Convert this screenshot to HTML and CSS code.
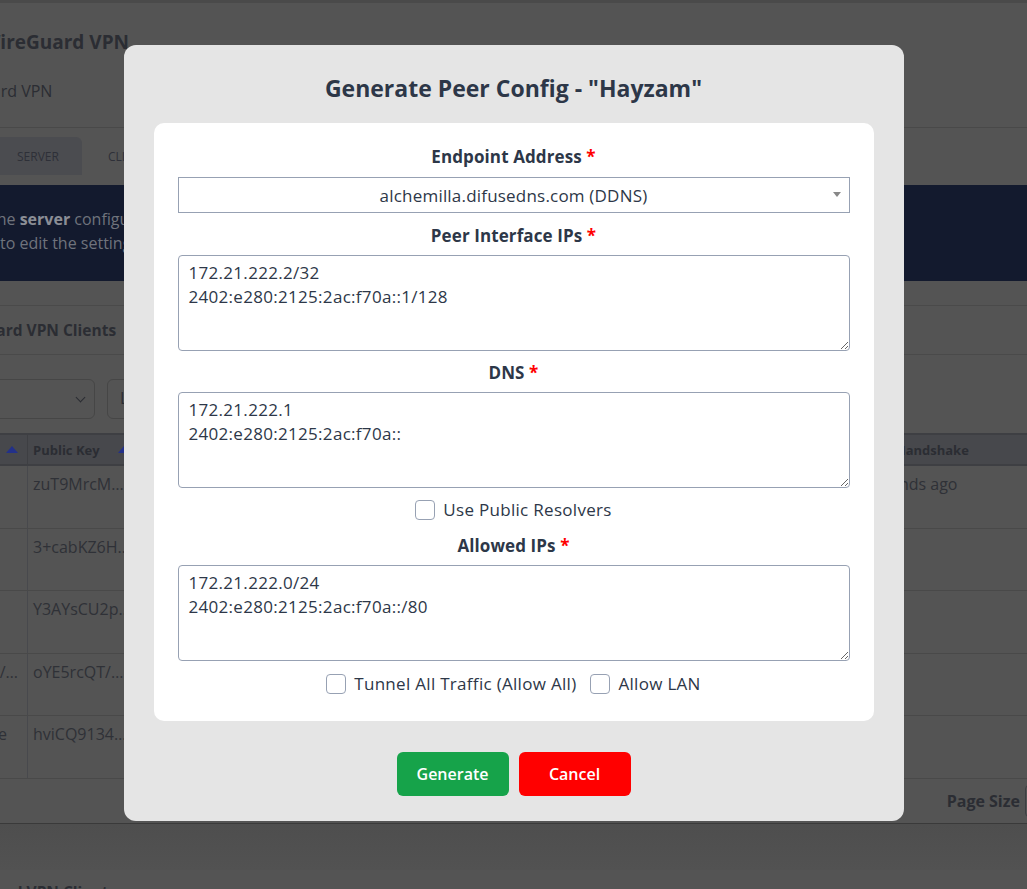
FILE: index.html
```html
<!DOCTYPE html>
<html lang="en">
<head>
    <meta charset="UTF-8">
    <meta name="viewport" content="width=device-width, initial-scale=1.0">
    <title>WireGuard VPN</title>
    <link rel="stylesheet" href="styles.css">
</head>
<body>

    <div class="page">
        <header class="page-header">
            <h1 class="page-title">WireGuard VPN</h1>
            <p class="page-subtitle">WireGuard VPN</p>
        </header>

        <nav class="tabs">
            <span class="tab active">SERVER</span>
            <span class="tab">CLIENTS</span>
        </nav>

        <div class="banner">
            <p class="banner-line first">the <b>server</b> configuration is shown below. Use the settings button</p>
            <p class="banner-line">to edit the settings of this interface.</p>
        </div>

        <h2 class="section-title">WireGuard VPN Clients</h2>

        <div class="filters">
            <div class="filter wide"><span class="chevron"></span></div>
            <div class="filter">Live</div>
        </div>

        <div class="table">
            <div class="thead">
                <div class="th first">Name <span class="sort"></span></div>
                <div class="th">Public Key <span class="sort"></span></div>
                <div class="th"></div>
                <div class="th last">Last Handshake</div>
            </div>
            <div class="tr">
                <div class="td first"></div>
                <div class="td">zuT9MrcM…</div>
                <div class="td"></div>
                <div class="td last">seconds ago</div>
            </div>
            <div class="tr">
                <div class="td first"></div>
                <div class="td">3+cabKZ6H…</div>
                <div class="td"></div>
                <div class="td last"></div>
            </div>
            <div class="tr">
                <div class="td first"></div>
                <div class="td">Y3AYsCU2p…</div>
                <div class="td"></div>
                <div class="td last"></div>
            </div>
            <div class="tr">
                <div class="td first">Hayzam-PC/…</div>
                <div class="td">oYE5rcQT/…</div>
                <div class="td"></div>
                <div class="td last"></div>
            </div>
            <div class="tr">
                <div class="td first short">iPhone</div>
                <div class="td">hviCQ9134…</div>
                <div class="td"></div>
                <div class="td last"></div>
            </div>
            <div class="tfoot">
                <span class="page-size">Page Size</span>
                <span class="page-size-box"></span>
            </div>
        </div>

        <div class="page-band"></div>
        <h2 class="section-title bottom">WireGuard VPN Clients</h2>
    </div>

    <!-- Modal de configuração do peer -->
    <div class="backdrop">
        <div class="modal">
            <h3 class="modal-title">Generate Peer Config - "Hayzam"</h3>

            <form class="card">
                <label class="field-label" for="endpoint">Endpoint Address <span class="req">*</span></label>
                <div class="select-wrap">
                    <select id="endpoint" class="field-select">
                        <option>alchemilla.difusedns.com (DDNS)</option>
                    </select>
                </div>

                <label class="field-label gap-md" for="peerips">Peer Interface IPs <span class="req">*</span></label>
                <textarea id="peerips" class="field-area">172.21.222.2/32
2402:e280:2125:2ac:f70a::1/128</textarea>

                <label class="field-label gap-sm" for="dns">DNS <span class="req">*</span></label>
                <textarea id="dns" class="field-area">172.21.222.1
2402:e280:2125:2ac:f70a::</textarea>

                <div class="check-row first-row">
                    <label class="check"><input type="checkbox"> Use Public Resolvers</label>
                </div>

                <label class="field-label gap-lg" for="allowed">Allowed IPs <span class="req">*</span></label>
                <textarea id="allowed" class="field-area">172.21.222.0/24
2402:e280:2125:2ac:f70a::/80</textarea>

                <div class="check-row last-row">
                    <label class="check"><input type="checkbox"> Tunnel All Traffic (Allow All)</label>
                    <label class="check"><input type="checkbox"> Allow LAN</label>
                </div>
            </form>

            <div class="actions">
                <button type="button" class="btn btn-generate">Generate</button>
                <button type="button" class="btn btn-cancel">Cancel</button>
            </div>
        </div>
    </div>

</body>
</html>
```

FILE: styles.css
```css
body {
    margin: 0;
    font-family: 'Open Sans', 'Noto Sans', sans-serif;
    background-color: #545454;
    color: #2b2d33;
    overflow: hidden;
}

/* pagina de fundo (ja escurecida pelo modal) */
.page {
    height: 889px;
    overflow: hidden;
    border-top: 3px solid #4a4a4a;
}

.page-header {
    margin-left: -18px;
    padding-top: 26px;
    height: 98px;
    border-bottom: 1px solid #494949;
}

.page-title {
    margin: 0;
    font-size: 19px;
    line-height: 26px;
    font-weight: 700;
}

.page-subtitle {
    margin: 24px 0 0 -46px;
    font-size: 16px;
    line-height: 24px;
}

.tabs {
    display: flex;
    gap: 3px;
    margin-top: 9px;
    height: 38px;
    margin-left: -6px;
}

.tab {
    display: flex;
    align-items: center;
    padding: 0 23px;
    font-size: 12px;
    color: #2e3038;
    border-radius: 6px 6px 0 0;
}

.tab.active {
    background-color: #4b4c50;
}

.banner {
    margin-top: 10px;
    height: 96px;
    box-sizing: border-box;
    padding-top: 22px;
    background-color: #131a2e;
    color: #6f737c;
    font-size: 16px;
    line-height: 24px;
}

.banner b {
    color: #8b8e96;
}

.banner-line {
    margin: 0;
    white-space: nowrap;
}

.banner-line.first {
    margin-left: -9px;
}

.section-title {
    margin: 24px 0 0 -61px;
    padding: 12px 0;
    font-size: 15.5px;
    line-height: 24px;
    font-weight: 700;
    border-top: 1px solid #4a4a4a;
    border-bottom: 1px solid #4a4a4a;
}

.filters {
    display: flex;
    gap: 12px;
    margin-top: 24px;
    height: 40px;
}

.filter {
    position: relative;
    width: 300px;
    border: 1px solid #464646;
    border-radius: 6px;
    box-sizing: border-box;
    padding: 7px 12px;
    font-size: 16px;
}

.filter.wide {
    margin-left: -205px;
}

.chevron {
    position: absolute;
    right: 10px;
    top: 14px;
    width: 6px;
    height: 6px;
    border-right: 1.5px solid #2b2d33;
    border-bottom: 1.5px solid #2b2d33;
    transform: rotate(45deg);
}

.table {
    margin-top: 14px;
    margin-left: -150px;
}

.thead, .tr {
    display: grid;
    grid-template-columns: 178px 200px 1fr 167px;
}

.thead {
    height: 33px;
    background-color: #47484c;
    border-top: 2px solid #3e3f43;
    border-bottom: 2px solid #3e3f43;
    box-sizing: border-box;
}

.th {
    display: flex;
    align-items: center;
    padding-left: 5px;
    font-size: 13px;
    font-weight: 700;
    border-right: 1px solid #3e3f43;
    white-space: nowrap;
}

.th.first {
    justify-content: space-between;
    padding-right: 9px;
}

.th.last {
    border-right: none;
}

.sort {
    display: inline-block;
    margin-left: 18px;
    width: 0;
    height: 0;
    border-left: 6px solid transparent;
    border-right: 6px solid transparent;
    border-bottom: 7px solid #23318a;
}

.tr {
    height: 62.6px;
    border-bottom: 1px solid #494949;
    box-sizing: border-box;
}

.td {
    padding: 6px 5px 0;
    font-size: 16px;
    line-height: 24px;
    color: #2f3137;
    border-right: 1px solid #48494d;
    white-space: nowrap;
    overflow: hidden;
}

.td.first {
    text-align: right;
    padding-right: 9px;
}

.td.first.short {
    padding-right: 20px;
}

.td.last {
    border-right: none;
}

.tfoot {
    display: flex;
    justify-content: flex-end;
    align-items: center;
    gap: 5px;
    height: 44px;
    margin-right: -60px;
    border-bottom: 1px solid #3a3a3a;
}

.page-size {
    font-size: 16px;
    font-weight: 700;
}

.page-size-box {
    width: 60px;
    height: 30px;
    border: 1px solid #3e3f43;
    border-radius: 4px;
}

.page-band {
    height: 46px;
    background: linear-gradient(#4e4e4e, #525252);
}

.section-title.bottom {
    margin-top: 10px;
    padding: 0;
    border: none;
}

/* modal */
.backdrop {
    position: fixed;
    inset: 0;
    display: flex;
    justify-content: center;
    align-items: flex-start;
    padding-top: 45px;
}

.modal {
    width: 780px;
    box-sizing: border-box;
    padding: 0 30px 25px;
    background-color: #e5e5e5;
    border-radius: 12px;
}

.modal-title {
    margin: 28px 0 20px;
    font-size: 23px;
    line-height: 30px;
    font-weight: 700;
    text-align: center;
    color: #2d3748;
}

.card {
    display: flex;
    flex-direction: column;
    padding: 22px 24px 25px;
    background-color: #ffffff;
    border-radius: 10px;
    color: #2d3748;
}

.field-label {
    display: block;
    margin-bottom: 8px;
    font-size: 17px;
    line-height: 24px;
    font-weight: 700;
    letter-spacing: 0.1px;
    text-align: center;
}

.field-label.gap-md {
    margin-top: 11px;
    margin-bottom: 7px;
}

.field-label.gap-sm {
    margin-top: 10px;
    margin-bottom: 7px;
}

.field-label.gap-lg {
    margin-top: 12px;
    margin-bottom: 7px;
}

.req {
    color: #ff0000;
}

.select-wrap {
    position: relative;
}

.select-wrap::after {
    content: "";
    position: absolute;
    right: 9px;
    top: 15px;
    border-left: 4px solid transparent;
    border-right: 4px solid transparent;
    border-top: 5px solid #888888;
}

.field-select {
    display: block;
    width: 100%;
    height: 36px;
    padding: 0 24px;
    border: 1px solid #97a1b3;
    border-radius: 0;
    background-color: #ffffff;
    font-family: inherit;
    font-size: 17px;
    letter-spacing: 0.2px;
    color: #2d3748;
    text-align: center;
    text-align-last: center;
    -webkit-appearance: none;
    appearance: none;
}

.field-area {
    display: block;
    width: 100%;
    height: 96px;
    box-sizing: border-box;
    padding: 5px 10px;
    border: 1px solid #97a1b3;
    border-radius: 4px;
    font-family: inherit;
    font-size: 17px;
    letter-spacing: 0.3px;
    line-height: 24px;
    color: #2d3748;
    resize: vertical;
}

.check-row {
    display: flex;
    justify-content: center;
    gap: 14px;
    height: 24px;
}

.check-row.first-row {
    margin-top: 10px;
}

.check-row.last-row {
    margin-top: 11px;
}

.check {
    display: flex;
    align-items: center;
    gap: 8px;
    font-size: 17px;
    letter-spacing: 0.3px;
    line-height: 24px;
}

.check input {
    -webkit-appearance: none;
    appearance: none;
    margin: 0;
    width: 20px;
    height: 20px;
    border: 1px solid #97a1b3;
    border-radius: 4px;
    background-color: #ffffff;
}

.actions {
    display: flex;
    justify-content: center;
    gap: 10px;
    margin-top: 31px;
}

.btn {
    width: 112px;
    height: 44px;
    border: none;
    border-radius: 6px;
    font-family: inherit;
    font-size: 16px;
    font-weight: 600;
    color: #ffffff;
    cursor: pointer;
}

.btn-generate {
    background-color: #16a34a;
}

.btn-cancel {
    background-color: #ff0000;
}
```
